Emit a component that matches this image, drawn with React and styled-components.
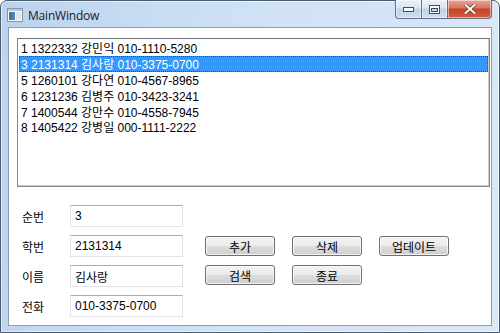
import React from "react";
import styled, { createGlobalStyle } from "styled-components";

const GlobalStyle = createGlobalStyle`
  html, body {
    margin: 0;
    padding: 0;
    background: #ffffff;
  }
  * {
    box-sizing: border-box;
  }
`;

const uiFont = `"Liberation Sans", "Noto Sans CJK KR", sans-serif`;

// Window chrome
const Window = styled.div`
  width: 500px;
  height: 333px;
  display: flex;
  flex-direction: column;
  border: 1px solid #4d5d71;
  border-radius: 7px 7px 0 0;
  background: linear-gradient(100deg, #bcd3ee 0%, #cfe1f5 45%, #dbe8f7 100%);
  box-shadow: inset 0 0 0 1px rgba(255, 255, 255, 0.55);
  font-family: ${uiFont};
`;

const TitleBar = styled.div`
  height: 26px;
  display: flex;
  align-items: flex-start;
`;

const TitleIcon = styled.div`
  width: 16px;
  height: 14px;
  margin: 7px 0 0 6px;
`;

const TitleText = styled.span`
  margin: 6px 0 0 5px;
  font-family: "Open Sans", "Noto Sans", sans-serif;
  font-size: 12px;
  color: #1b1b1b;
  letter-spacing: -0.2px;
`;

const Caption = styled.div`
  margin-left: auto;
  margin-right: 7px;
  display: flex;
  height: 19px;
  margin-top: -1px;
`;

const CaptionButton = styled.div`
  width: ${(p) => p.w}px;
  height: 19px;
  display: flex;
  align-items: center;
  justify-content: center;
  border: 1px solid #5f7088;
  border-top: none;
  border-left: ${(p) => (p.first ? "1px solid #5f7088" : "none")};
  border-radius: ${(p) => p.radius || "0"};
  background: ${(p) =>
    p.close
      ? "linear-gradient(#e8a493 0%, #d7775f 45%, #c4432a 50%, #d55c3f 100%)"
      : "linear-gradient(#e9f1fb 0%, #d9e5f4 45%, #bfd2ea 50%, #cddff3 100%)"};
  box-shadow: inset 0 0 0 1px rgba(255, 255, 255, 0.5);
`;

const Client = styled.div`
  flex: 1;
  margin: 0 7px 6px 7px;
  background: #ffffff;
  border: 1px solid #8d9db1;
  padding: 10px 1px 0 8px;
  display: flex;
  flex-direction: column;
`;

// List box
const ListBox = styled.div`
  height: 149px;
  border: 1px solid #828790;
  border-top-color: #6f747c;
  padding: 1px;
  display: flex;
  flex-direction: column;
  box-shadow: inset -1px -1px 0 #c9cacc;
`;

const Row = styled.div`
  height: 15.8px;
  display: flex;
  align-items: center;
  padding-left: 2px;
  font-size: 12px;
  color: ${(p) => (p.selected ? "#ffffff" : "#000000")};
  background: ${(p) => (p.selected ? "#3399ff" : "transparent")};
  outline: ${(p) => (p.selected ? "1px dotted #1b4f8a" : "none")};
  outline-offset: -1px;
  white-space: pre;
`;

// Form
const Form = styled.div`
  margin-top: 18px;
  padding-left: 5px;
  display: grid;
  grid-template-columns: 48px 113px 1fr;
  grid-auto-rows: 22px;
  row-gap: 8px;
`;

const Label = styled.div`
  grid-column: 1;
  grid-row: ${(p) => p.row};
  font-size: 12px;
  display: flex;
  align-items: center;
  color: #000;
`;

const TextBox = styled.div`
  grid-column: 2;
  grid-row: ${(p) => p.row};
  border: 1px solid #e2e3ea;
  border-top-color: #abadb3;
  font-size: 12px;
  display: flex;
  align-items: center;
  padding-left: 4px;
  color: #000;
`;

const ButtonArea = styled.div`
  grid-column: 3;
  grid-row: 2 / span 2;
  padding: 1px 0 0 22px;
  display: grid;
  grid-template-columns: repeat(3, 70px);
  grid-auto-rows: 20px;
  column-gap: 17px;
  row-gap: 9px;
`;

const Button = styled.div`
  border: 1px solid #707070;
  border-radius: 3px;
  background: linear-gradient(#f2f2f2 0%, #ebebeb 50%, #dddddd 50%, #cfcfcf 100%);
  box-shadow: inset 0 0 0 1px rgba(255, 255, 255, 0.7);
  font-size: 12px;
  display: flex;
  align-items: center;
  justify-content: center;
  color: #000;
`;

const students = [
  "1 1322332 강민익 010-1110-5280",
  "3 2131314 김사랑 010-3375-0700",
  "5 1260101 강다연 010-4567-8965",
  "6 1231236 김병주 010-3423-3241",
  "7 1400544 강만수 010-4558-7945",
  "8 1405422 강병일 000-1111-2222",
];

const fields = [
  ["순번", "3"],
  ["학번", "2131314"],
  ["이름", "김사랑"],
  ["전화", "010-3375-0700"],
];

const AppIcon = () => (
  <svg width="16" height="14" viewBox="0 0 16 14">
    <rect x="0.5" y="0.5" width="15" height="13" fill="#f4f6f8" stroke="#8a96a3" />
    <rect x="1" y="1" width="14" height="2" fill="#b9c7d6" />
    <rect x="2" y="4" width="3" height="8" fill="#3c8a5a" />
    <rect x="5" y="4" width="3" height="8" fill="#4f7fc0" />
    <rect x="9" y="4" width="5" height="8" fill="#dfe6ee" />
  </svg>
);

export default function App() {
  return (
    <>
      <GlobalStyle />
      <Window>
        <TitleBar>
          <TitleIcon>
            <AppIcon />
          </TitleIcon>
          <TitleText>MainWindow</TitleText>
          <Caption>
            <CaptionButton w={27} first radius="0 0 0 4px">
              <svg width="11" height="5" viewBox="0 0 11 5">
                <rect x="0.5" y="0.5" width="10" height="4" fill="#fff" stroke="#3d4d63" />
              </svg>
            </CaptionButton>
            <CaptionButton w={26}>
              <svg width="11" height="9" viewBox="0 0 11 9">
                <rect x="0.5" y="0.5" width="10" height="8" fill="#fff" stroke="#3d4d63" />
                <rect x="2.5" y="3.5" width="6" height="3" fill="#c5d4e6" stroke="#3d4d63" />
              </svg>
            </CaptionButton>
            <CaptionButton w={44} close radius="0 0 4px 0">
              <svg width="12" height="10" viewBox="0 0 12 10">
                <path
                  d="M1.5 1 L10.5 9 M10.5 1 L1.5 9"
                  stroke="#6b2a1c"
                  strokeWidth="3.2"
                  strokeLinecap="square"
                />
                <path
                  d="M1.5 1 L10.5 9 M10.5 1 L1.5 9"
                  stroke="#ffffff"
                  strokeWidth="2"
                  strokeLinecap="square"
                />
              </svg>
            </CaptionButton>
          </Caption>
        </TitleBar>
        <Client>
          <ListBox>
            {students.map((s, i) => (
              <Row key={i} selected={i === 1}>
                {s}
              </Row>
            ))}
          </ListBox>
          <Form>
            {fields.map(([label, value], i) => (
              <React.Fragment key={label}>
                <Label row={i + 1}>{label}</Label>
                <TextBox row={i + 1}>{value}</TextBox>
              </React.Fragment>
            ))}
            <ButtonArea>
              <Button>추가</Button>
              <Button>삭제</Button>
              <Button>업데이트</Button>
              <Button>검색</Button>
              <Button>종료</Button>
            </ButtonArea>
          </Form>
        </Client>
      </Window>
    </>
  );
}
